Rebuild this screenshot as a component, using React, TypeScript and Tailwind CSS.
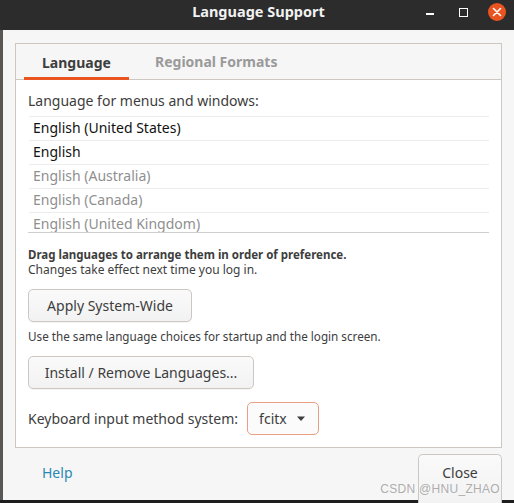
import React from 'react';

const font = { fontFamily: '"Noto Sans", "DejaVu Sans", sans-serif' };

const languages = [
  { name: 'English (United States)', active: true },
  { name: 'English', active: true },
  { name: 'English (Australia)', active: false },
  { name: 'English (Canada)', active: false },
  { name: 'English (United Kingdom)', active: false },
];

const TitleBar: React.FC = () => (
  <div className="h-[30px] bg-[#2c2c2c] flex items-center pb-[6px] relative shrink-0">
    <div className="flex-1 text-center text-[14.5px] font-bold text-[#f2f2f2] pl-[3px]">Language Support</div>
    <div className="absolute right-[8px] top-0 h-[24px] flex items-center">
      <div className="w-[8px] h-[1.5px] bg-white translate-y-[2px]" />
      <div className="ml-[25px] w-[9px] h-[9px] border-[1.5px] border-white" />
      <div className="ml-[20px] w-[18px] h-[18px] rounded-full bg-[#e95420] flex items-center justify-center">
        <svg width="10" height="10" viewBox="0 0 10 10">
          <path d="M1.5 1.5 L8.5 8.5 M8.5 1.5 L1.5 8.5" stroke="white" strokeWidth="1.6" strokeLinecap="round" />
        </svg>
      </div>
    </div>
  </div>
);

const GtkButton: React.FC<{ label: string; className?: string }> = ({ label, className }) => (
  <button
    className={`h-[33px] rounded-[5px] border border-[#cdc7c2] bg-gradient-to-b from-[#fafafa] to-[#f2f2f2] text-[14px] text-[#3d3d3d] whitespace-nowrap flex items-center justify-center shadow-[0_1px_0_rgba(0,0,0,0.04)] ${className ?? ''}`}
  >
    {label}
  </button>
);

export default function App() {
  return (
    <div className="w-[514px] h-[503px] bg-[#1e1e1e] flex flex-col overflow-hidden" style={font}>
      <TitleBar />
      <div className="flex flex-1 min-h-0">
        <div className="w-[3px] bg-[#5a5654]" />
        <div className="flex-1 bg-[#f6f6f6] flex flex-col h-[470px] relative">
          <div className="mt-[13px] ml-[12px] mr-[12px] border border-[#cdc7c2] flex flex-col">
            <div className="h-[36px] bg-[#f6f6f6] border-b border-[#cdc7c2] flex items-end pl-[8px]">
              <div className="h-full px-[18px] flex items-center border-b-[3px] border-[#e95420] -mb-px pt-[3px] text-[14px] font-bold text-[#3d3d3d] w-[105px]">
                Language
              </div>
              <div className="h-full px-[26px] flex items-center pb-[1px] text-[14px] font-bold text-[#9a9a9a]">
                Regional Formats
              </div>
            </div>
            <div className="bg-white px-[12px] pt-[12px] pb-[12px] flex flex-col">
              <div className="text-[14px] leading-[18px] text-[#3d3d3d]">Language for menus and windows:</div>
              <div className="mt-[6px] h-[117px] overflow-hidden border-b border-[#cfcfcf]">
                {languages.map((l) => (
                  <div
                    key={l.name}
                    className={`h-[24px] border-t border-[#ececec] flex items-center pl-[4px] pb-[2px] ml-[1px] text-[14px] ${l.active ? 'text-[#111111]' : 'text-[#8f8f8f]'}`}
                  >
                    {l.name}
                  </div>
                ))}
              </div>
              <div className="mt-[14px] text-[11.5px] leading-[15px] font-bold text-[#3d3d3d]">
                Drag languages to arrange them in order of preference.
              </div>
              <div className="text-[12px] leading-[15px] text-[#3d3d3d]">Changes take effect next time you log in.</div>
              <div className="mt-[12px] flex">
                <GtkButton label="Apply System-Wide" className="w-[164px]" />
              </div>
              <div className="mt-[7px] text-[11.7px] leading-[15px] text-[#3d3d3d]">
                Use the same language choices for startup and the login screen.
              </div>
              <div className="mt-[12px] flex">
                <GtkButton label="Install / Remove Languages..." className="w-[226px]" />
              </div>
              <div className="mt-[13px] flex items-center">
                <span className="text-[14px] text-[#3d3d3d]">Keyboard input method system:</span>
                <div className="ml-[9px] w-[72px] h-[33px] rounded-[5px] border-[1.5px] border-[#e8a083] bg-[#fbfbfb] flex items-center pl-[11px] gap-[9px] text-[14px] text-[#3d3d3d]">
                  <span>fcitx</span>
                  <svg width="10" height="6" viewBox="0 0 10 6">
                    <path d="M1 0.5 L9 0.5 L5 5 Z" fill="#3d3d3d" />
                  </svg>
                </div>
              </div>
            </div>
          </div>
          <div className="flex items-start justify-between pl-[39px] pr-[12px] mt-[6px]">
            <span className="text-[14px] leading-[18px] text-[#2a8ab2] mt-[10px]">Help</span>
            <button className="w-[84px] h-[50px] rounded-t-[5px] border border-b-0 border-[#cdc7c2] bg-gradient-to-b from-[#fafafa] to-[#f2f2f2] text-[14px] leading-[18px] text-[#3d3d3d] flex justify-center pt-[9px]">
              Close
            </button>
          </div>
          <div
            className="absolute right-[14px] bottom-[5px] text-[12px] leading-[12px] tracking-[0.3px] text-[#9a9a9a]/80"
            style={{ fontFamily: '"Liberation Sans", sans-serif' }}
          >
            CSDN @HNU_ZHAO
          </div>
        </div>
      </div>
      <div className="h-[3px] bg-[#1e1e1e] shrink-0" />
    </div>
  );
}
